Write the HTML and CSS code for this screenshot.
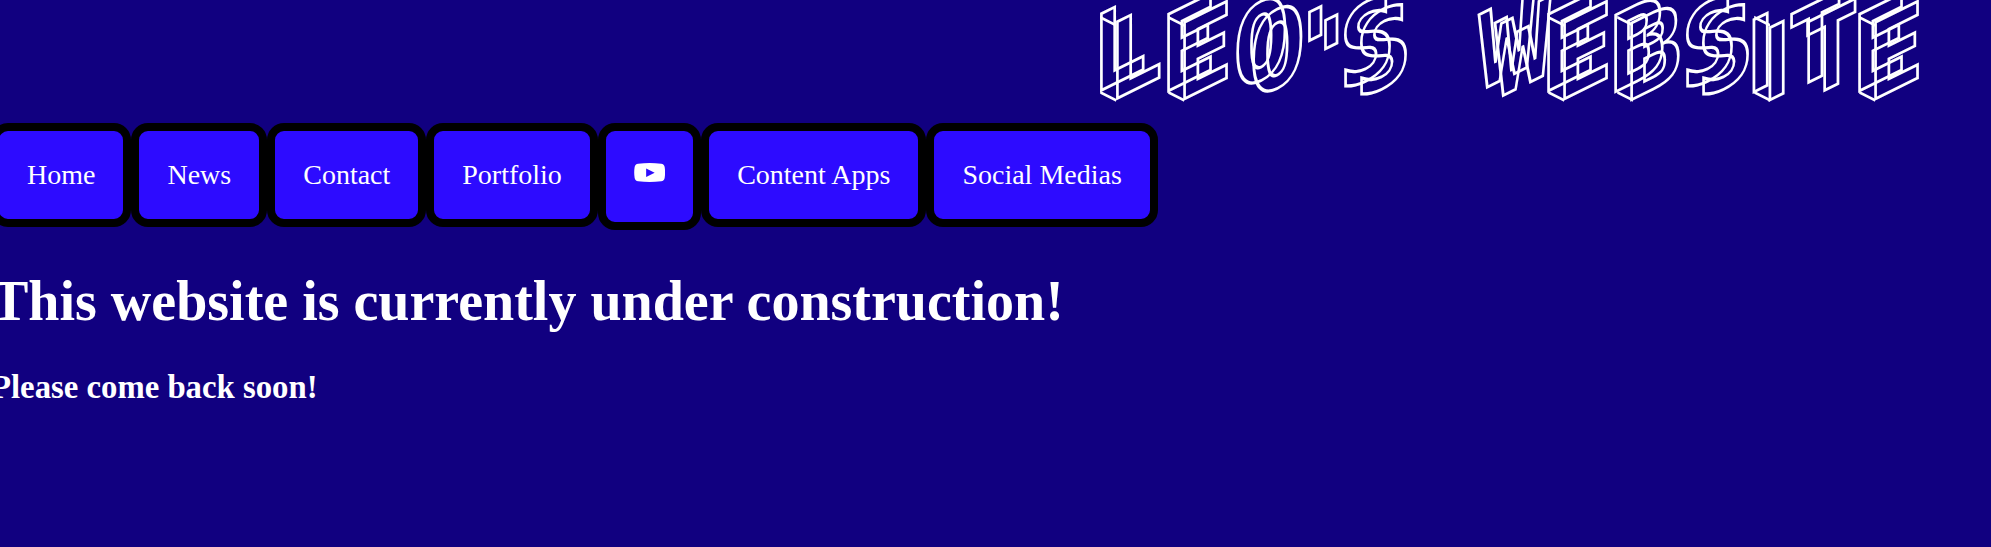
FILE: index.html
```html
<!DOCTYPE html>
<html lang="en">
<head>
<meta charset="utf-8">
<title>Leo's Website</title>
<link rel="stylesheet" href="styles.css">
</head>
<body>
<header class="banner"><span class="glyph solid ell" data-c="L">L</span><span class="glyph solid" data-c="E">E</span><span class="glyph" data-c="O">O</span><span class="glyph tick" data-c="'">'</span><span class="glyph" data-c="S">S</span><span class="space"> </span><span class="glyph wide" data-c="W">W</span><span class="glyph solid" data-c="E">E</span><span class="glyph solid" data-c="B">B</span><span class="glyph" data-c="S">S</span><span class="glyph solid slim" data-c="I">I</span><span class="glyph" data-c="T">T</span><span class="glyph solid" data-c="E">E</span></header>
<nav class="menu">
<a class="item">Home</a>
<a class="item">News</a>
<a class="item">Contact</a>
<a class="item">Portfolio</a>
<a class="item video" aria-label="YouTube"><svg class="play" viewBox="0 0 31 19"><path fill="currentColor" fill-rule="evenodd" d="M4 .7Q15.500-.7 27 .7Q30 1 30.500 4Q31.400 9.500 30.500 15Q30 18 27 18.300Q15.500 19.700 4 18.300Q1 18 .5 15Q-.4 9.500 .5 4Q1 1 4 .7ZM12 5.500V14L20.500 9.700Z"/></svg></a>
<a class="item">Content Apps</a>
<a class="item">Social Medias</a>
</nav>
<main class="content">
<h1 class="headline">This website is currently under construction!</h1>
<h3 class="note">Please come back soon!</h3>
</main>
</body>
</html>
```
FILE: styles.css
```css
body {
  margin: 0;
  background: #110080;
  color: #fff;
  font: 28px/32px "Liberation Serif", "Times New Roman", serif;
  height: 547px;
  overflow: hidden;
}
.banner {
  display: flex;
  box-sizing: border-box;
  height: 123px;
  padding: 2px 0 0 1116px;
  font: bold 105px/123px "DejaVu Sans Mono", monospace;
  white-space: pre;
}
/* Each letter leans upward to the right; its copy forms the rear face. */
.glyph {
  position: relative;
  flex: none;
  width: 68.4px;
  height: 123px;
  color: transparent;
  -webkit-text-stroke: 3px #fff;
  transform: skewY(-26.3deg) scaleX(.88);
  transform-origin: 0 99px;
  text-indent: -4px;
}
.glyph::before {
  content: attr(data-c);
  position: absolute;
  left: -18.2px;
  top: -16px;
}
/* Side panel joining the front and rear faces. */
.solid { text-indent: -8px; }
.solid::after {
  content: "";
  position: absolute;
  box-sizing: border-box;
  left: -18.2px;
  top: 14px;
  width: 18.2px;
  height: 78px;
  border: solid #fff;
  border-width: 3px 0;
  transform: skewY(41.3deg);
  transform-origin: 50% 50%;
}
.ell { text-indent: -10px; }
.wide { text-indent: -1px; }
.space { flex: none; width: 68.4px; }
.tick { width: 38px; text-indent: -20px; }
.slim { width: 37px; font-family: "Liberation Sans", sans-serif; text-indent: -7px; }
.menu {
  display: flex;
  align-items: flex-start;
  margin-left: -9px;
}
.item {
  padding: 28px;
  border: 8px solid #000;
  border-radius: 17px;
  background: #2d0bff;
  white-space: nowrap;
}
.video { height: 35px; }
.play {
  display: block;
  width: 31.300px;
  height: 19px;
  margin-top: 4px;
}
.content { margin-left: -9px; }
.headline {
  margin: 39px 0 0;
  font-size: 56px;
  line-height: 64px;
}
.note {
  margin: 35px 0 0;
  font-size: 32.760px;
  line-height: 38px;
}
```
